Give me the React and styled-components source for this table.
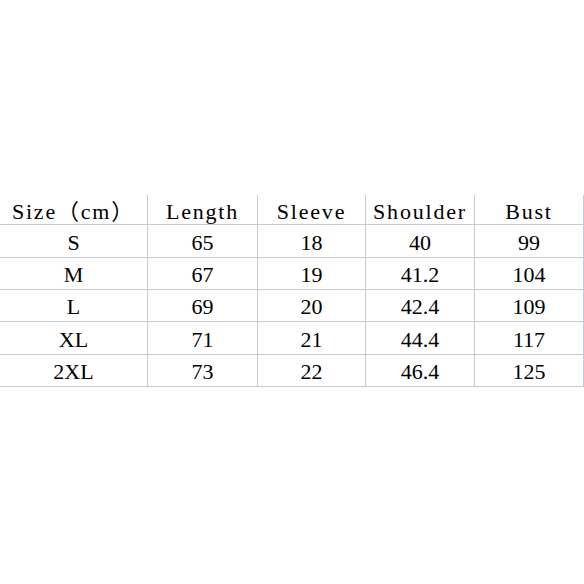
import React from "react";
import styled, { createGlobalStyle } from "styled-components";

const GlobalStyle = createGlobalStyle`
  html, body {
    margin: 0;
    padding: 0;
    background: #fff;
  }
`;

const columns = ["Size（cm）", "Length", "Sleeve", "Shoulder", "Bust"];

const rows = [
  ["S", "65", "18", "40", "99"],
  ["M", "67", "19", "41.2", "104"],
  ["L", "69", "20", "42.4", "109"],
  ["XL", "71", "21", "44.4", "117"],
  ["2XL", "73", "22", "46.4", "125"],
];

export default function App() {
  return (
    <Page>
      <GlobalStyle />
      <Chart>
        {columns.map((c) => (
          <HeadCell key={c}>{c}</HeadCell>
        ))}
        {rows.map((r) =>
          r.map((v, i) => <Cell key={r[0] + i}>{v}</Cell>)
        )}
      </Chart>
    </Page>
  );
}

const Page = styled.div`
  width: 584px;
  height: 584px;
  padding-top: 195px;
  box-sizing: border-box;
  overflow: hidden;
`;

const Chart = styled.div`
  display: grid;
  grid-template-columns: 148px 110px 108px 109px 109px;
  grid-template-rows: 30px 33px 32px 32px 33px 32px;
  width: 584px;
`;

const BaseCell = styled.div`
  box-sizing: border-box;
  display: flex;
  align-items: center;
  justify-content: center;
  border-right: 1px solid #c6cbd9;
  border-bottom: 1px solid #c6cbd9;
  color: #000;
  font-family: "Liberation Serif", "Noto Sans CJK SC", serif;
  font-size: 22px;
  line-height: 1;
  white-space: nowrap;
`;

const HeadCell = styled(BaseCell)`
  padding-top: 4px;
  letter-spacing: 1.8px;
`;

const Cell = styled(BaseCell)`
  padding-top: 3px;
`;
